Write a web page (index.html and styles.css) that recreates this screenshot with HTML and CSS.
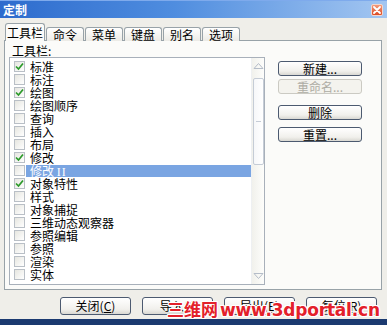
FILE: index.html
```html
<!DOCTYPE html>
<html lang="zh-CN">
<head>
  <meta charset="UTF-8" />
  <title>定制</title>
  <link rel="stylesheet" href="styles.css">
</head>
<body>
  <div class="window">
    <div class="titlebar">
      <span class="title">定制</span>
      <span class="close-btn">
        <svg width="8" height="8" viewBox="0 0 8 8"><path d="M1 1 L7 7 M7 1 L1 7" stroke="#fff" stroke-width="1.8" stroke-linecap="round"/></svg>
      </span>
    </div>

    <div class="tabs">
      <div class="tab active">工具栏</div>
      <div class="tab">命令</div>
      <div class="tab">菜单</div>
      <div class="tab">键盘</div>
      <div class="tab">别名</div>
      <div class="tab">选项</div>
    </div>

    <div class="panel">
      <div class="label">工具栏:</div>
      <div class="panel-row">
        <div class="listbox">
          <ul class="items">
            <li><span class="check on"><svg width="9" height="9" viewBox="0 0 9 9"><path d="M1 4.5 L3.5 7 L8 1.5" fill="none" stroke="#2c9a2a" stroke-width="1.7"/></svg></span><span class="name">标准</span></li>
            <li><span class="check"></span><span class="name">标注</span></li>
            <li><span class="check on"><svg width="9" height="9" viewBox="0 0 9 9"><path d="M1 4.5 L3.5 7 L8 1.5" fill="none" stroke="#2c9a2a" stroke-width="1.7"/></svg></span><span class="name">绘图</span></li>
            <li><span class="check"></span><span class="name">绘图顺序</span></li>
            <li><span class="check"></span><span class="name">查询</span></li>
            <li><span class="check"></span><span class="name">插入</span></li>
            <li><span class="check"></span><span class="name">布局</span></li>
            <li><span class="check on"><svg width="9" height="9" viewBox="0 0 9 9"><path d="M1 4.5 L3.5 7 L8 1.5" fill="none" stroke="#2c9a2a" stroke-width="1.7"/></svg></span><span class="name">修改</span></li>
            <li class="selected"><span class="check"></span><span class="name">修改 <span class="roman">II</span></span></li>
            <li><span class="check on"><svg width="9" height="9" viewBox="0 0 9 9"><path d="M1 4.5 L3.5 7 L8 1.5" fill="none" stroke="#2c9a2a" stroke-width="1.7"/></svg></span><span class="name">对象特性</span></li>
            <li><span class="check"></span><span class="name">样式</span></li>
            <li><span class="check"></span><span class="name">对象捕捉</span></li>
            <li><span class="check"></span><span class="name">三维动态观察器</span></li>
            <li><span class="check"></span><span class="name">参照编辑</span></li>
            <li><span class="check"></span><span class="name">参照</span></li>
            <li><span class="check"></span><span class="name">渲染</span></li>
            <li><span class="check"></span><span class="name">实体</span></li>
          </ul>
          <div class="scrollbar">
            <div class="arrow">
              <svg width="11" height="8" viewBox="0 0 11 8"><path d="M1 6.5 L5.5 1.5 L10 6.5 Z" fill="none" stroke="#b4bcc8" stroke-width="1"/></svg>
            </div>
            <div class="thumb"><span class="grip"></span></div>
            <div class="arrow down">
              <svg width="11" height="8" viewBox="0 0 11 8"><path d="M1 1.5 L5.5 6.5 L10 1.5 Z" fill="none" stroke="#b4bcc8" stroke-width="1"/></svg>
            </div>
          </div>
        </div>

        <div class="side-buttons">
          <button class="btn">新建...</button>
          <button class="btn disabled">重命名...</button>
          <button class="btn gap-big">删除</button>
          <button class="btn gap-mid">重置...</button>
        </div>
      </div>
    </div>

    <div class="footer">
      <button class="btn wide">关闭(<u>C</u>)</button>
      <button class="btn wide">导入(<u>I</u>)</button>
      <button class="btn wide">导出(<u>E</u>)</button>
      <button class="btn wide">复位(<u>R</u>)</button>
    </div>

    <!-- 水印 -->
    <div class="watermark"><span class="wm-cn">三维网</span><span class="wm-en">www.3dportal.cn</span></div>
  </div>
</body>
</html>
```

FILE: styles.css
```css
* {
  box-sizing: border-box;
}

body {
  margin: 0;
  font-family: "Noto Sans CJK SC", "DejaVu Sans", sans-serif;
  font-size: 12px;
  color: #000;
  background: #ffffff;
}

.window {
  position: relative;
  width: 387px;
  height: 325px;
  background: #efeee9;
  border-bottom: 6px solid #1b3a70;
  overflow: hidden;
}

/* 标题栏 */
.titlebar {
  height: 18px;
  display: flex;
  align-items: center;
  justify-content: space-between;
  padding: 0 4px 0 3px;
  background: linear-gradient(to right, #2d6bcd, #4f8ddf 45%, #a3c6f1);
  border-top: 1px solid #7eaaec;
}

.title {
  color: #fff;
  font-weight: bold;
  font-size: 12px;
  line-height: 16px;
}

.close-btn {
  width: 12px;
  height: 12px;
  display: flex;
  align-items: center;
  justify-content: center;
  border: 1px solid #f3d6cc;
  border-radius: 2px;
  background: linear-gradient(#f29a7c, #dc4b24);
}

/* 选项卡 */
.tabs {
  display: flex;
  align-items: flex-end;
  gap: 1px;
  height: 18px;
  margin: 5px 0 -1px 5px;
  position: relative;
  z-index: 1;
}

.tab {
  height: 14px;
  line-height: 13px;
  padding: 0 6px;
  border: 1px solid #98a2a8;
  border-bottom: none;
  border-radius: 3px 3px 0 0;
  background: linear-gradient(#ffffff, #ecebe6);
  font-size: 12px;
  white-space: nowrap;
}

.tab.active {
  height: 18px;
  width: 40px;
  line-height: 17px;
  padding: 0;
  background: #fbfbf9;
  text-align: center;
}

.panel {
  height: 250px;
  margin: 0 5px 0 4px;
  padding: 3px 0 0 4px;
  border: 1px solid #98a2a8;
  background: #fbfbf9;
}

.label {
  height: 13px;
  line-height: 13px;
  margin-left: 3px;
}

.panel-row {
  display: flex;
}

/* 列表 */
.listbox {
  width: 256px;
  height: 228px;
  border: 1px solid #a8b0ba;
  background: #fff;
  display: flex;
}

.items {
  list-style: none;
  margin: 0;
  padding: 2px 0 0 4px;
  flex: 1;
}

.items li {
  height: 13px;
  display: flex;
  align-items: center;
}

.check {
  width: 11px;
  height: 11px;
  border: 1px solid #b9bfc6;
  background: linear-gradient(135deg, #e6e6e0, #ffffff);
  display: flex;
  align-items: center;
  justify-content: center;
  flex: none;
}

.name {
  flex: 1;
  height: 12px;
  line-height: 12px;
  margin-left: 1px;
  padding-left: 4px;
  white-space: nowrap;
}

.items li.selected .name {
  background: #7aa5e2;
  color: #fff;
}

.roman {
  font-family: "Liberation Serif", serif;
  letter-spacing: 1px;
}

/* 滚动条 */
.scrollbar {
  width: 13px;
  display: flex;
  flex-direction: column;
  align-items: center;
  background: linear-gradient(to right, #f1f1ec, #fdfdfb);
  border-left: 1px solid #eef0f2;
}

.arrow {
  height: 16px;
  display: flex;
  align-items: center;
  justify-content: center;
}

.arrow.down {
  margin-top: auto;
  height: 16px;
}

.thumb {
  width: 11px;
  height: 87px;
  margin-top: 4px;
  border: 1px solid #c5ccd6;
  border-radius: 2px;
  background: linear-gradient(to right, #f6f7f9, #ffffff);
  display: flex;
  align-items: center;
  justify-content: center;
}

.grip {
  width: 5px;
  height: 1px;
  background: #c5ccd6;
}

/* 按钮 */
.btn {
  font-family: "Noto Sans CJK SC", "DejaVu Sans", sans-serif;
  font-size: 12px;
  color: #000;
  height: 15px;
  padding: 0;
  line-height: 13px;
  border: 1px solid #4c5a70;
  border-radius: 3px;
  background: linear-gradient(#ffffff, #f1f0ec 70%, #d9d8d2);
  text-align: center;
}

.btn.disabled {
  color: #aeaca4;
  border-color: #cbcac3;
  background: #f4f3ee;
}

.side-buttons {
  display: flex;
  flex-direction: column;
  gap: 3px;
  width: 84px;
  margin: 4px 0 0 13px;
}

.side-buttons .btn {
  width: 84px;
}

.side-buttons .gap-big {
  margin-top: 8px;
}

.side-buttons .gap-mid {
  margin-top: 4px;
}

.footer {
  display: flex;
  gap: 11px;
  margin: 7px 0 0 60px;
}

.btn.wide {
  width: 71px;
  height: 18px;
  line-height: 16px;
}

.btn u {
  text-decoration: underline;
}

/* 水印 */
.watermark {
  position: absolute;
  left: 167px;
  top: 299px;
  display: flex;
  align-items: baseline;
  color: #e3202a;
  font-weight: bold;
  text-shadow: 1px 0 #fff, -1px 0 #fff, 0 1px #fff, 0 -1px #fff, 1px 1px #fff, -1px -1px #fff, 1px -1px #fff, -1px 1px #fff;
}

.wm-cn {
  font-size: 17px;
  line-height: 19px;
}

.wm-en {
  font-family: "DejaVu Sans", sans-serif;
  font-size: 17px;
  line-height: 19px;
  letter-spacing: -0.2px;
  margin-left: 2px;
}
```
